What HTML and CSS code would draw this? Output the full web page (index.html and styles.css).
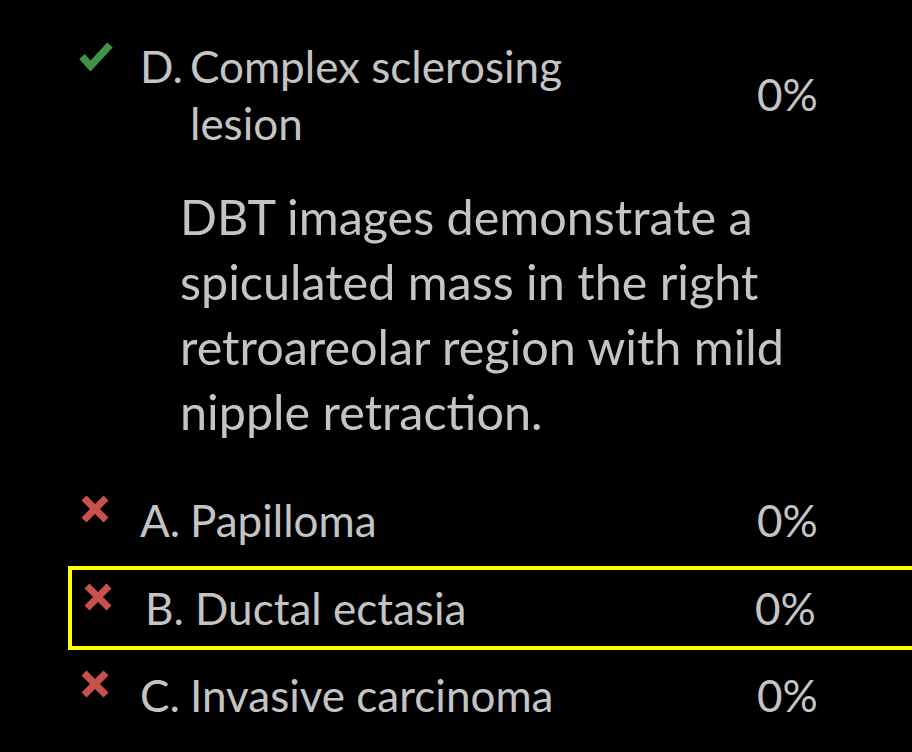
FILE: index.html
```html
<!DOCTYPE html>
<html>
<head>
<meta charset="utf-8">
<link rel="stylesheet" href="styles.css">
</head>
<body>
<div class="panel">
  <div class="option correct">
    <span class="icon">
      <svg viewBox="0 0 36 32" width="36" height="32"><path d="M4 16.5 L12.5 26 L32 5" fill="none" stroke="#3f9447" stroke-width="7.5"/></svg>
    </span>
    <div class="label"><span class="letter">D.</span><span class="text">Complex sclerosing lesion</span></div>
    <div class="pct">0%</div>
  </div>
  <p class="explain">DBT images demonstrate a spiculated mass in the right retroareolar region with mild nipple retraction.</p>
  <div class="option wrong">
    <span class="icon">
      <svg viewBox="0 0 30 30" width="30" height="30"><path d="M4 4 L26 26 M26 4 L4 26" stroke="#c9514d" stroke-width="7"/></svg>
    </span>
    <div class="label"><span class="letter">A.</span><span class="text">Papilloma</span></div>
    <div class="pct">0%</div>
  </div>
  <div class="option wrong selected">
    <span class="icon">
      <svg viewBox="0 0 30 30" width="30" height="30"><path d="M4 4 L26 26 M26 4 L4 26" stroke="#c9514d" stroke-width="7"/></svg>
    </span>
    <div class="label"><span class="letter">B.</span><span class="text">Ductal ectasia</span></div>
    <div class="pct">0%</div>
  </div>
  <div class="option wrong">
    <span class="icon">
      <svg viewBox="0 0 30 30" width="30" height="30"><path d="M4 4 L26 26 M26 4 L4 26" stroke="#c9514d" stroke-width="7"/></svg>
    </span>
    <div class="label"><span class="letter">C.</span><span class="text">Invasive carcinoma</span></div>
    <div class="pct">0%</div>
  </div>
</div>
</body>
</html>
```
FILE: styles.css
```css
html, body {
  margin: 0;
  padding: 0;
  background: #000;
}
body {
  font-family: Lato, "Noto Sans", sans-serif;
  color: #c4c4c4;
  width: 912px;
  height: 752px;
  overflow: hidden;
}
.panel {
  padding: 24px 0 0 68px;
  display: flex;
  flex-direction: column;
}
.option {
  display: flex;
  align-items: flex-start;
  width: 844px;
  box-sizing: border-box;
  border: 4px solid transparent;
  border-right: 0;
  padding: 9.5px 0;
}
.icon {
  flex: none;
  width: 68px;
  display: flex;
  padding-left: 8px;
  box-sizing: border-box;
}
.correct .icon {
  padding-left: 6px;
  margin-top: 2.5px;
}
.label {
  flex: none;
  display: flex;
  width: 617px;
  font-size: 44px;
  line-height: 57px;
}
.letter {
  flex: none;
  width: 50px;
}
.text {
  width: 460px;
}
.pct {
  font-size: 44px;
  line-height: 57px;
  align-self: center;
}
.explain {
  margin: 18.5px 0 35px 112px;
  width: 680px;
  font-size: 48.5px;
  line-height: 65px;
}
.wrong {
  height: 84px;
  margin-bottom: 3.5px;
}
.wrong .icon {
  margin-top: 2px;
}
.selected {
  border-color: #ffff00;
  border-right: 0;
}
.selected .icon {
  padding-left: 11px;
  width: 73px;
}
.selected .label {
  width: 610px;
}
```
